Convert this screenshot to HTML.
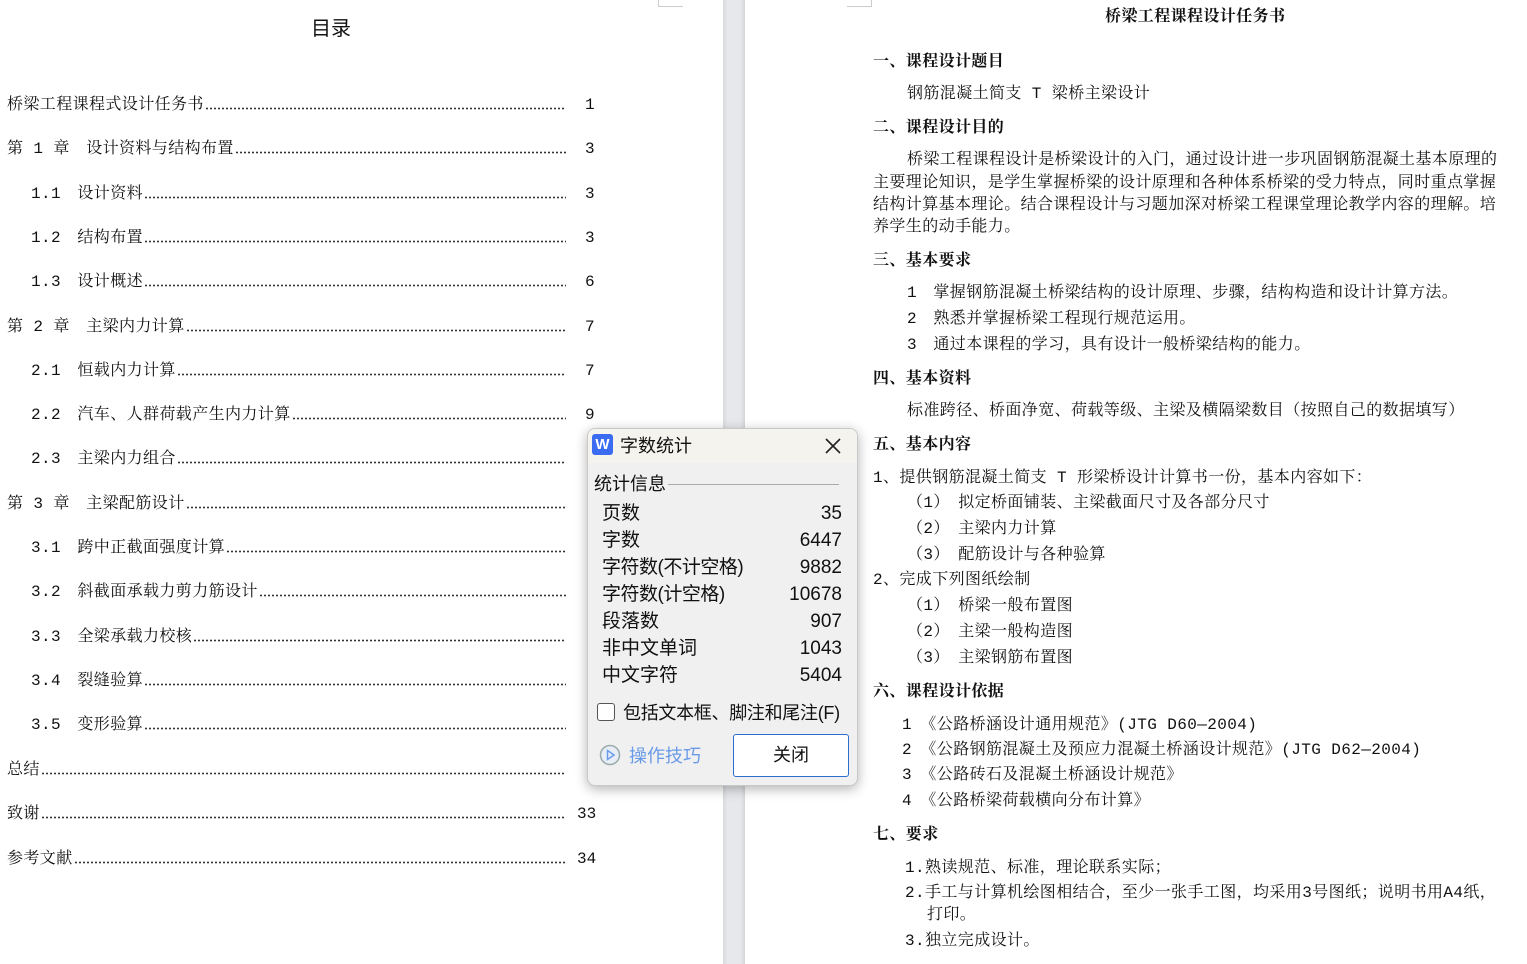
<!DOCTYPE html>
<html><head><meta charset="utf-8"><style>
body{margin:0;width:1527px;height:964px;overflow:hidden;background:#fff;position:relative;font-family:"Liberation Mono","Noto Serif CJK SC",serif;color:#111}
.t{position:absolute;white-space:nowrap;font-size:16px;line-height:20px;letter-spacing:0.4px}
.gap{position:absolute;left:723px;top:0;width:22px;height:964px;background:linear-gradient(90deg,#d8dadd,#e6e8eb 20%,#e6e8eb 80%,#d4d6d9)}
.row{position:absolute;display:flex;align-items:flex-end;white-space:nowrap;font-size:16px;line-height:20px;letter-spacing:0.4px;right:961px}
.row .d{flex:1;height:3px;margin:0 0 5px 1px;background:radial-gradient(circle,#333 0.9px,transparent 1.1px) 0 0/4px 3px repeat-x}
.n{position:absolute;left:585px;font-size:16px;line-height:20px}
.b{font-weight:bold}
.dlg{position:absolute;left:587px;top:428px;width:269px;height:356px;background:#f0f0f0;border:1px solid #c8c8c8;border-radius:8px;box-shadow:0 3px 12px rgba(0,0,0,.3);font-family:"Liberation Sans","Noto Sans CJK SC",sans-serif;overflow:hidden}
.dlg .s{position:absolute;white-space:nowrap;font-size:19px;line-height:24px;color:#111}
.r{text-align:right;right:15px}
</style></head><body>
<div style="position:absolute;left:658px;top:6px;width:25px;height:1px;background:#ccc"></div>
<div style="position:absolute;left:658px;top:0;width:1px;height:7px;background:#ccc"></div>
<div style="position:absolute;left:847px;top:6px;width:25px;height:1px;background:#ccc"></div>
<div style="position:absolute;left:871px;top:0;width:1px;height:7px;background:#ccc"></div>
<div class="gap"></div>
<div class="t" style="left:311px;top:16px;font-size:20px;line-height:26px;letter-spacing:0;font-family:'Liberation Sans','Noto Sans CJK SC',sans-serif">目录</div>

<div class="row" style="left:7px;top:95px">桥梁工程课程式设计任务书<span class="d"></span></div><div class="n" style="top:95px">1</div>
<div class="row" style="left:7px;top:139px">第 1 章　设计资料与结构布置<span class="d"></span></div><div class="n" style="top:139px">3</div>
<div class="row" style="left:31px;top:184px">1.1　设计资料<span class="d"></span></div><div class="n" style="top:184px">3</div>
<div class="row" style="left:31px;top:228px">1.2　结构布置<span class="d"></span></div><div class="n" style="top:228px">3</div>
<div class="row" style="left:31px;top:272px">1.3　设计概述<span class="d"></span></div><div class="n" style="top:272px">6</div>
<div class="row" style="left:7px;top:317px">第 2 章　主梁内力计算<span class="d"></span></div><div class="n" style="top:317px">7</div>
<div class="row" style="left:31px;top:361px">2.1　恒载内力计算<span class="d"></span></div><div class="n" style="top:361px">7</div>
<div class="row" style="left:31px;top:405px">2.2　汽车、人群荷载产生内力计算<span class="d"></span></div><div class="n" style="top:405px">9</div>
<div class="row" style="left:31px;top:449px">2.3　主梁内力组合<span class="d"></span></div>
<div class="row" style="left:7px;top:494px">第 3 章　主梁配筋设计<span class="d"></span></div>
<div class="row" style="left:31px;top:538px">3.1　跨中正截面强度计算<span class="d"></span></div>
<div class="row" style="left:31px;top:582px">3.2　斜截面承载力剪力筋设计<span class="d"></span></div>
<div class="row" style="left:31px;top:627px">3.3　全梁承载力校核<span class="d"></span></div>
<div class="row" style="left:31px;top:671px">3.4　裂缝验算<span class="d"></span></div>
<div class="row" style="left:31px;top:715px">3.5　变形验算<span class="d"></span></div>
<div class="row" style="left:7px;top:760px">总结<span class="d"></span></div>
<div class="row" style="left:7px;top:804px">致谢<span class="d"></span></div><div class="n" style="top:804px;left:577px">33</div>
<div class="row" style="left:7px;top:849px">参考文献<span class="d"></span></div><div class="n" style="top:849px;left:577px">34</div>

<div class="t b" style="left:1105px;top:7px">桥梁工程课程设计任务书</div>
<div class="t b" style="left:873px;top:52px">一、课程设计题目</div>
<div class="t" style="left:907px;top:84px">钢筋混凝土简支 T 梁桥主梁设计</div>
<div class="t b" style="left:873px;top:118px">二、课程设计目的</div>
<div class="t" style="left:907px;top:150px">桥梁工程课程设计是桥梁设计的入门，通过设计进一步巩固钢筋混凝土基本原理的</div>
<div class="t" style="left:873px;top:173px">主要理论知识，是学生掌握桥梁的设计原理和各种体系桥梁的受力特点，同时重点掌握</div>
<div class="t" style="left:873px;top:195px">结构计算基本理论。结合课程设计与习题加深对桥梁工程课堂理论教学内容的理解。培</div>
<div class="t" style="left:873px;top:217px">养学生的动手能力。</div>
<div class="t b" style="left:873px;top:251px">三、基本要求</div>
<div class="t" style="left:907px;top:283px">1　掌握钢筋混凝土桥梁结构的设计原理、步骤，结构构造和设计计算方法。</div>
<div class="t" style="left:907px;top:309px">2　熟悉并掌握桥梁工程现行规范运用。</div>
<div class="t" style="left:907px;top:335px">3　通过本课程的学习，具有设计一般桥梁结构的能力。</div>
<div class="t b" style="left:873px;top:369px">四、基本资料</div>
<div class="t" style="left:907px;top:401px">标准跨径、桥面净宽、荷载等级、主梁及横隔梁数目（按照自己的数据填写）</div>
<div class="t b" style="left:873px;top:435px">五、基本内容</div>
<div class="t" style="left:873px;top:468px">1、提供钢筋混凝土简支 T 形梁桥设计计算书一份，基本内容如下：</div>
<div class="t" style="left:907px;top:493px">（1）　拟定桥面铺装、主梁截面尺寸及各部分尺寸</div>
<div class="t" style="left:907px;top:519px">（2）　主梁内力计算</div>
<div class="t" style="left:907px;top:545px">（3）　配筋设计与各种验算</div>
<div class="t" style="left:873px;top:570px">2、完成下列图纸绘制</div>
<div class="t" style="left:907px;top:596px">（1）　桥梁一般布置图</div>
<div class="t" style="left:907px;top:622px">（2）　主梁一般构造图</div>
<div class="t" style="left:907px;top:648px">（3）　主梁钢筋布置图</div>
<div class="t b" style="left:873px;top:682px">六、课程设计依据</div>
<div class="t" style="left:902px;top:715px">1　《公路桥涵设计通用规范》(JTG D60—2004)</div>
<div class="t" style="left:902px;top:740px">2　《公路钢筋混凝土及预应力混凝土桥涵设计规范》(JTG D62—2004)</div>
<div class="t" style="left:902px;top:765px">3　《公路砖石及混凝土桥涵设计规范》</div>
<div class="t" style="left:902px;top:791px">4　《公路桥梁荷载横向分布计算》</div>
<div class="t b" style="left:873px;top:825px">七、要求</div>
<div class="t" style="left:905px;top:858px">1.熟读规范、标准，理论联系实际；</div>
<div class="t" style="left:905px;top:883px">2.手工与计算机绘图相结合，至少一张手工图，均采用3号图纸；说明书用A4纸，</div>
<div class="t" style="left:927px;top:905px">打印。</div>
<div class="t" style="left:905px;top:931px">3.独立完成设计。</div>

<div class="dlg">
<div style="position:absolute;left:0;top:0;width:100%;height:34px;background:#f5f3ee"></div>
<div style="position:absolute;left:4px;top:5px;width:21px;height:21px;background:#3b6bf0;border-radius:3px;color:#fff;font:bold 15px/21px 'Liberation Sans',sans-serif;text-align:center">W</div>
<div class="s" style="left:32px;top:5px;font-size:18px">字数统计</div>
<svg style="position:absolute;left:236px;top:8px" width="18" height="18"><path d="M2 2L16 16M16 2L2 16" stroke="#222" stroke-width="1.6"/></svg>
<div class="s" style="left:6px;top:43px;font-size:18px">统计信息</div>
<div style="position:absolute;left:80px;top:55px;width:171px;height:1px;background:#aaa"></div>
<div class="s" style="left:14px;top:73px">页数</div><div class="s r" style="top:73px">35</div>
<div class="s" style="left:14px;top:100px">字数</div><div class="s r" style="top:100px">6447</div>
<div class="s" style="left:14px;top:127px;letter-spacing:-0.5px">字符数(不计空格)</div><div class="s r" style="top:127px">9882</div>
<div class="s" style="left:14px;top:154px;letter-spacing:-0.5px">字符数(计空格)</div><div class="s r" style="top:154px">10678</div>
<div class="s" style="left:14px;top:181px">段落数</div><div class="s r" style="top:181px">907</div>
<div class="s" style="left:14px;top:208px">非中文单词</div><div class="s r" style="top:208px">1043</div>
<div class="s" style="left:14px;top:235px">中文字符</div><div class="s r" style="top:235px">5404</div>
<div style="position:absolute;left:9px;top:274px;width:16px;height:16px;border:1px solid #555;border-radius:3px;background:#fff"></div>
<div class="s" style="left:35px;top:272px;font-size:18px;letter-spacing:-0.3px">包括文本框、脚注和尾注(F)</div>
<svg style="position:absolute;left:11px;top:315px" width="22" height="22"><circle cx="11" cy="11" r="9.5" fill="#e8eef8" stroke="#9aa" stroke-width="1.5"/><path d="M8.5 6.5L15 11L8.5 15.5Z" fill="none" stroke="#6a9be8" stroke-width="1.5"/></svg>
<div class="s" style="left:41px;top:315px;color:#6a9be8;font-size:18px">操作技巧</div>
<div style="position:absolute;left:145px;top:305px;width:114px;height:41px;border:1px solid #2a6fd0;border-radius:3px;background:#fff;font-size:18px;line-height:41px;text-align:center">关闭</div>
</div>
</body></html>
